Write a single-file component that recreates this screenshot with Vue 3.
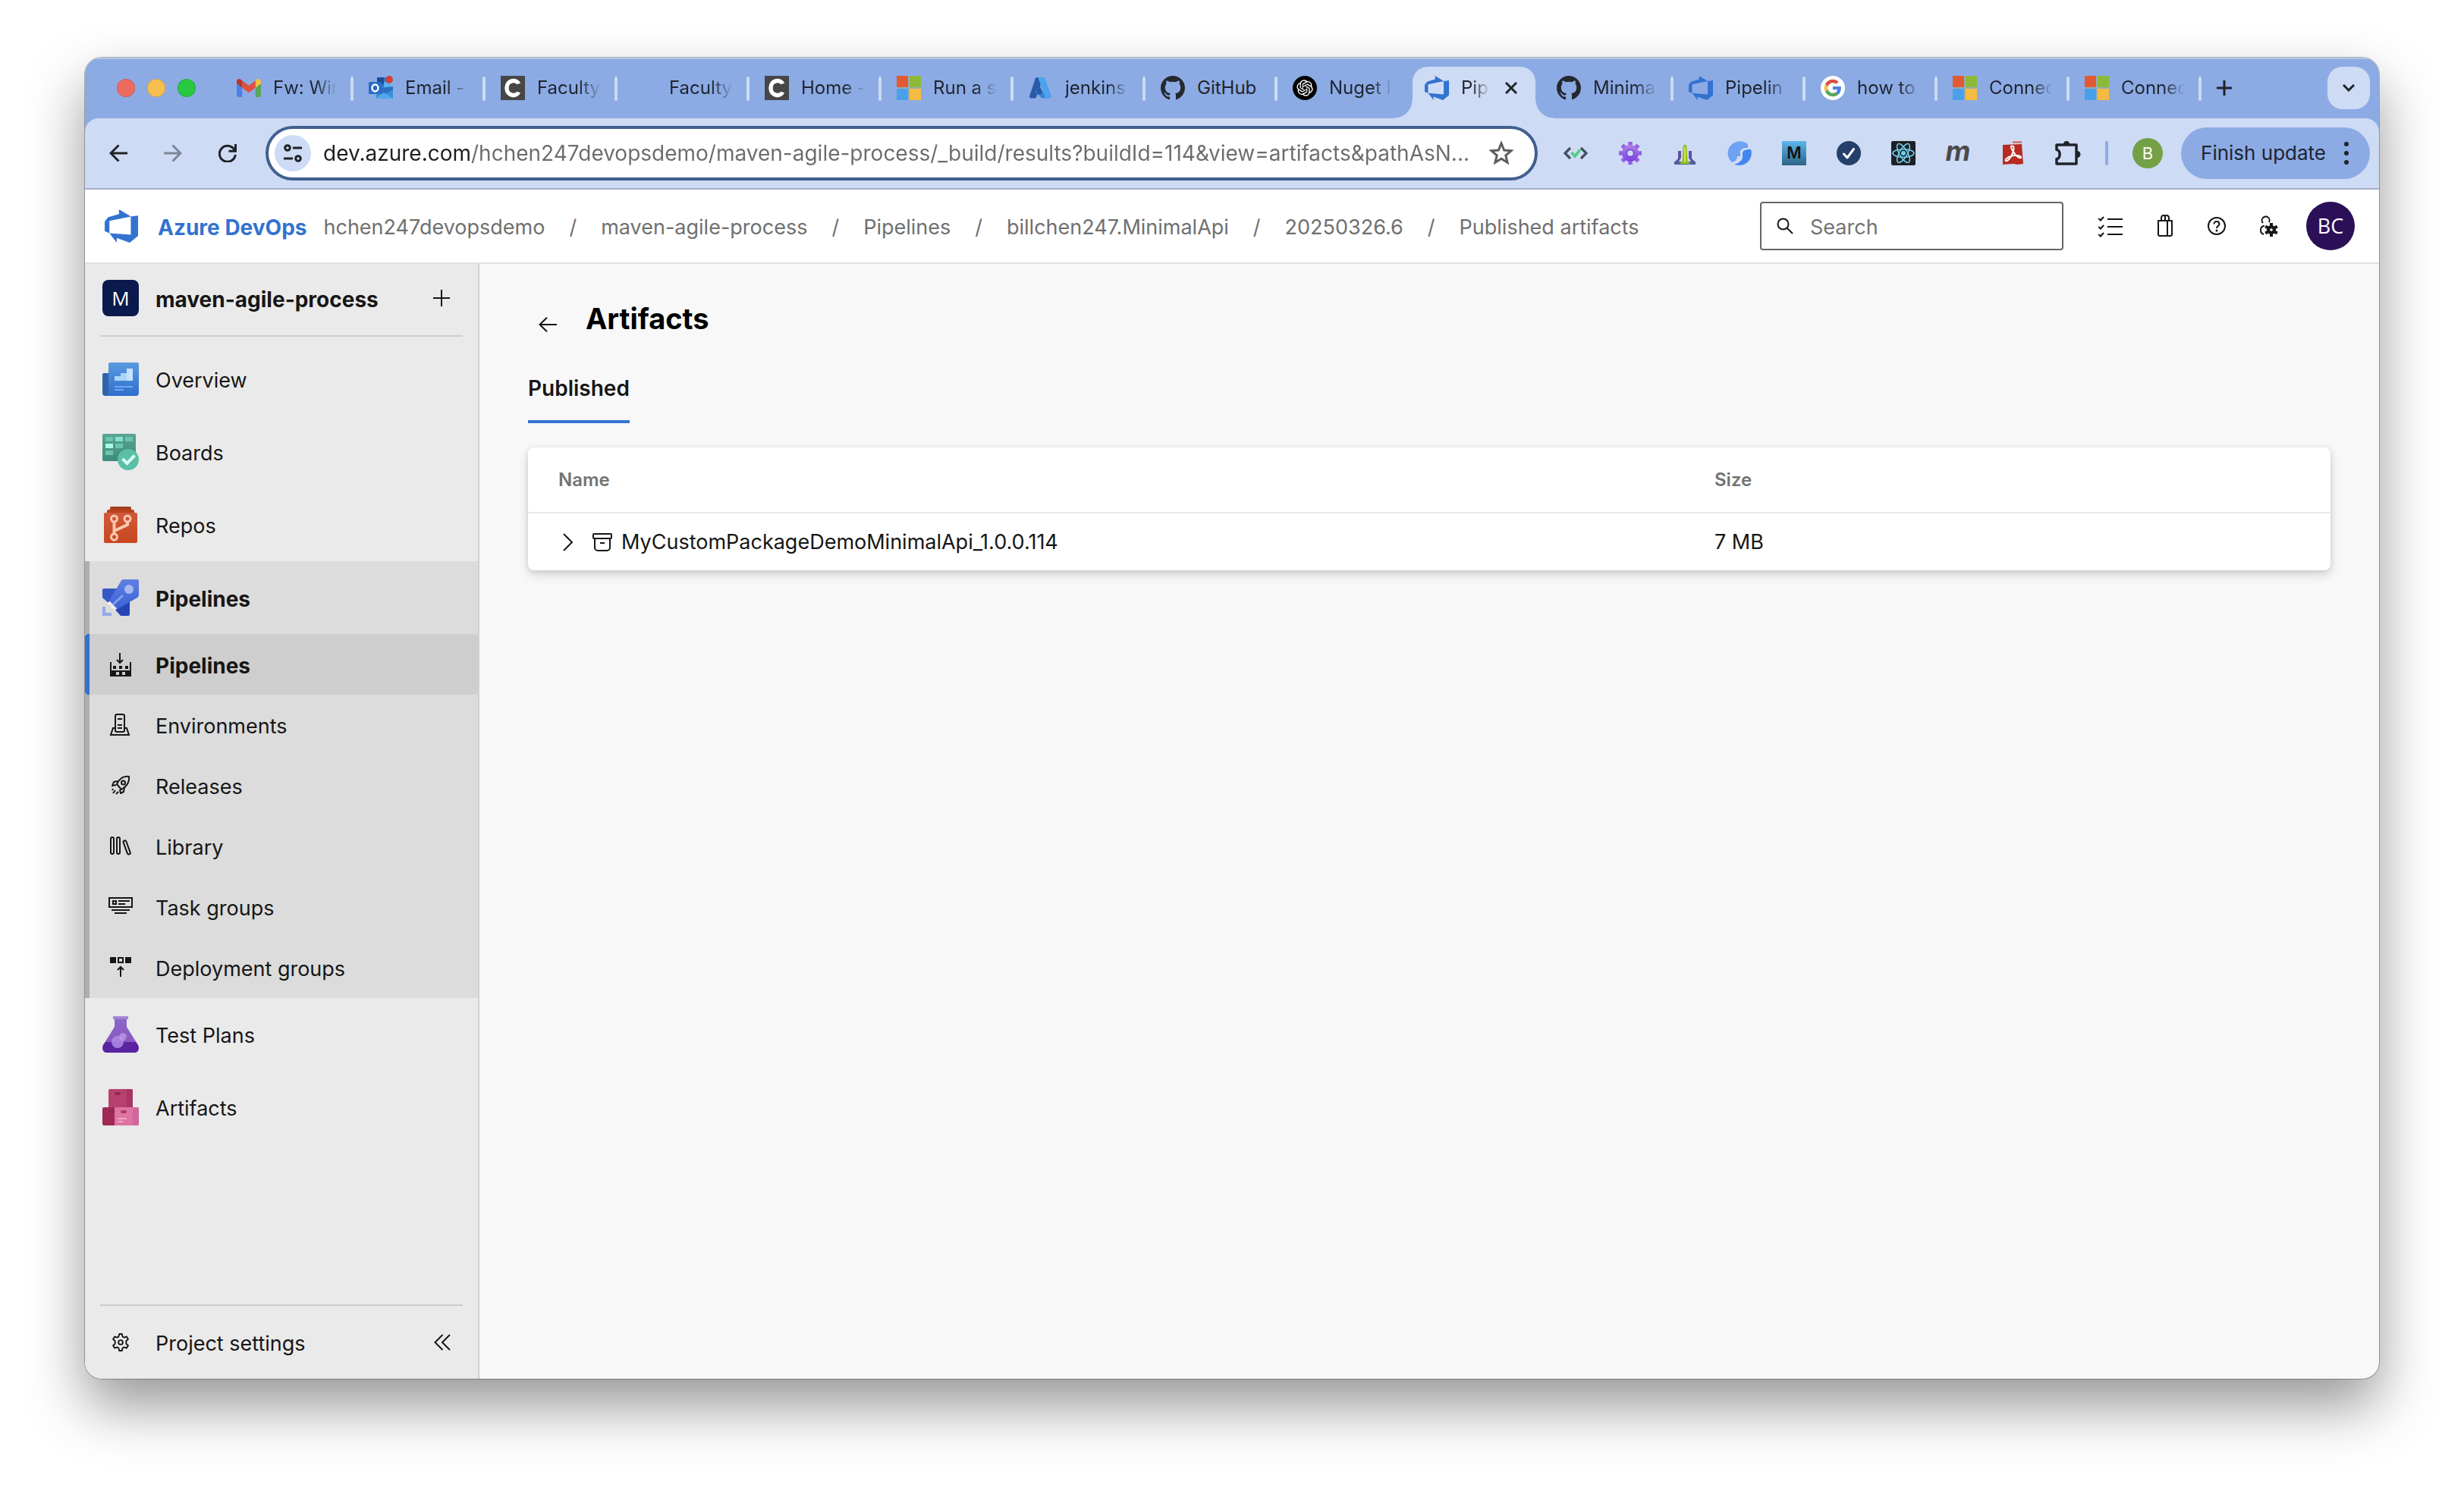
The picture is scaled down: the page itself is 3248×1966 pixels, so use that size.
<script setup>
const devopsMark =
  '<path fill="#3273cf" d="M17 4v9.74l-4 3.28-6.2-2.26V17l-3.51-4.59 10.23.8V4.44zm-3.41.49L7.85 1v2.29L2.58 4.84 1 6.87v4.61l2.26 1V6.57z"/>'
const githubMark =
  '<path fill="#24292f" d="M8 0C3.58 0 0 3.58 0 8c0 3.54 2.29 6.53 5.47 7.59.4.07.55-.17.55-.38 0-.19-.01-.82-.01-1.49-2.01.37-2.53-.49-2.69-.94-.09-.23-.48-.94-.82-1.13-.28-.15-.68-.52-.01-.53.63-.01 1.08.58 1.23.82.72 1.21 1.87.87 2.33.66.07-.52.28-.87.51-1.07-1.78-.2-3.64-.89-3.64-3.95 0-.87.31-1.59.82-2.15-.08-.2-.36-1.02.08-2.12 0 0 .67-.21 2.2.82.64-.18 1.32-.27 2-.27s1.36.09 2 .27c1.53-1.04 2.2-.82 2.2-.82.44 1.1.16 1.92.08 2.12.51.56.82 1.27.82 2.15 0 3.07-1.87 3.75-3.65 3.95.29.25.54.73.54 1.48 0 1.07-.01 1.93-.01 2.2 0 .21.15.46.55.38A8.01 8.01 0 0 0 16 8c0-4.42-3.58-8-8-8z"/>'
const cMark =
  '<rect width="32" height="32" fill="#464646"/><path d="M23.500 10.500C21.500 4.500 8 4.500 8 16s13.500 11.500 15.500 5.500" fill="none" stroke="#fff" stroke-width="5.500"/>'
const msMark =
  '<path fill="#e25a32" d="M0 0h15v15H0z"/><path fill="#8cba38" d="M17 0h15v15H17z"/><path fill="#48a0ea" d="M0 17h15v15H0z"/><path fill="#f6bb42" d="M17 17h15v15H17z"/><path stroke="#9fae9f" stroke-width="2" d="M0 16h32M16 0v32" opacity=".6"/>'

const icons = {
  gmail: [
    '52 42 88 66',
    '<path fill="#4f80e8" d="M58 108h14V74L52 59v43c0 3.320 2.690 6 6 6"/><path fill="#58a55c" d="M120 108h14c3.320 0 6-2.690 6-6V59l-20 15"/><path fill="#f2c042" d="M120 48v26l20-15v-8c0-7.420-8.470-11.650-14.400-7.200"/><path fill="#e0503f" d="M72 74V48l24 18 24-18v26L96 92"/><path fill="#b8362a" d="M52 51v8l20 15V48l-5.600-4.200c-5.940-4.450-14.400-.220-14.400 7.200"/>',
  ],
  outlook: [
    '0 0 32 32',
    '<path fill="#2f78c8" d="M11 2h18v18H11z"/><path fill="#1c4f96" d="M11 2h9v9h-9z"/><path fill="#57b4f0" d="M20 8h9v9h-9z"/><path fill="#3b8fdd" d="M9 16l23-1v14a1 1 0 0 1-1 1H10z"/><path fill="#2a6fbd" d="M32 14v4l-12 7-11-8z"/><path fill="#52a9e8" d="M9 30l11-8 12 8z"/><rect x="0" y="8" width="17" height="16" rx="1" fill="#2b6cc4"/><ellipse cx="8.500" cy="16" rx="4" ry="4.500" fill="none" stroke="#fff" stroke-width="2.400"/><circle cx="27" cy="5" r="5" fill="#cf4339"/>',
  ],
  c: ['0 0 32 32', cMark],
  none: ['0 0 32 32', ''],
  ms: ['0 0 32 32', msMark],
  azure: [
    '0 0 32 32',
    '<path fill="#2a5aa8" d="M10.500 2h8.500L10 28a2 2 0 0 1-2 1.500H3a2 2 0 0 1-2-2.600L8.700 3.400A2 2 0 0 1 10.500 2z"/><path fill="#3a7fd0" d="M22 20H9.500a1 1 0 0 0-.6 1.600l8 7.400 1.600.500h7z"/><path fill="#4aa3ee" d="M21.300 3.300A2 2 0 0 0 19.500 2H11a2 2 0 0 1 1.800 1.300L21 27a2 2 0 0 1-1.900 2.500h8.700A2 2 0 0 0 30 27z"/><path fill="#2a5aa8" d="M14 12l-4 12h6l2-3z"/>',
  ],
  github: ['0 0 16 16', githubMark],
  openai: [
    '-6 -6 36 36',
    '<circle cx="12" cy="12" r="18"/><path fill="#fff" d="M22.2819 9.8211a5.9847 5.9847 0 0 0-.5157-4.9108 6.0462 6.0462 0 0 0-6.5098-2.9A6.0651 6.0651 0 0 0 4.9807 4.1818a5.9847 5.9847 0 0 0-3.9977 2.9 6.0462 6.0462 0 0 0 .7427 7.0966 5.98 5.98 0 0 0 .511 4.9107 6.051 6.051 0 0 0 6.5146 2.9001A5.9847 5.9847 0 0 0 13.2599 24a6.0557 6.0557 0 0 0 5.7718-4.2058 5.9894 5.9894 0 0 0 3.9977-2.9001 6.0557 6.0557 0 0 0-.7475-7.0729zm-9.022 12.6081a4.4755 4.4755 0 0 1-2.8764-1.0408l.1419-.0804 4.7783-2.7582a.7948.7948 0 0 0 .3927-.6813v-6.7369l2.02 1.1686a.071.071 0 0 1 .038.052v5.5826a4.504 4.504 0 0 1-4.4945 4.4944zm-9.6607-4.1254a4.4708 4.4708 0 0 1-.5346-3.0137l.142.0852 4.783 2.7582a.7712.7712 0 0 0 .7806 0l5.8428-3.3685v2.3324a.0804.0804 0 0 1-.0332.0615L9.74 19.9502a4.4992 4.4992 0 0 1-6.1408-1.6464zM2.3408 7.8956a4.485 4.485 0 0 1 2.3655-1.9728V11.6a.7664.7664 0 0 0 .3879.6765l5.8144 3.3543-2.0201 1.1685a.0757.0757 0 0 1-.071 0l-4.8303-2.7865A4.504 4.504 0 0 1 2.3408 7.872zm16.5963 3.8558L13.1038 8.364 15.1192 7.2a.0757.0757 0 0 1 .071 0l4.8303 2.7913a4.4944 4.4944 0 0 1-.6765 8.1042v-5.6772a.79.79 0 0 0-.407-.667zm2.0107-3.0231l-.142-.0852-4.7735-2.7818a.7759.7759 0 0 0-.7854 0L9.409 9.2297V6.8974a.0662.0662 0 0 1 .0284-.0615l4.8303-2.7866a4.4992 4.4992 0 0 1 6.6802 4.66zM8.3065 12.863l-2.02-1.1638a.0804.0804 0 0 1-.038-.0567V6.0742a4.4992 4.4992 0 0 1 7.3757-3.4537l-.142.0805L8.704 5.459a.7948.7948 0 0 0-.3927.6813zm1.0976-2.3654l2.602-1.4998 2.6069 1.4998v2.9994l-2.5974 1.4997-2.6067-1.4997Z"/>',
  ],
  devops: ['1 1 16 16', devopsMark],
  google: [
    '-10 -10 68 68',
    '<circle cx="24" cy="24" r="34" fill="#fff"/><path fill="#d94f40" d="M24 9.500c3.540 0 6.710 1.220 9.210 3.600l6.850-6.850C35.900 2.380 30.470 0 24 0 14.620 0 6.510 5.380 2.560 13.220l7.980 6.190C12.430 13.720 17.740 9.500 24 9.500z"/><path fill="#4b80e8" d="M46.980 24.550c0-1.570-.150-3.090-.380-4.550H24v9.020h12.940c-.580 2.960-2.260 5.480-4.780 7.180l7.730 6c4.510-4.180 7.090-10.360 7.090-17.650z"/><path fill="#f2bd42" d="M10.530 28.590c-.480-1.450-.760-2.990-.760-4.590s.270-3.140.760-4.590l-7.980-6.190C.920 16.460 0 20.120 0 24s.920 7.540 2.560 10.780l7.970-6.190z"/><path fill="#58a55c" d="M24 48c6.480 0 11.930-2.130 15.890-5.810l-7.730-6c-2.150 1.450-4.920 2.300-8.160 2.300-6.260 0-11.570-4.220-13.470-9.910l-7.980 6.190C6.510 42.620 14.620 48 24 48z"/>',
  ],

  extCode: [
    '0 0 32 32',
    '<path fill="none" stroke="#42505e" stroke-width="3.200" d="M9 9l-7 7 7 7M23 9l7 7-7 7"/><path fill="none" stroke="#4fce84" stroke-width="3.600" d="M10.500 15l4.500 5 7-8.500"/>',
  ],
  extGear: [
    '0 0 32 32',
    '<defs><linearGradient id="pg" x1="0" y1="0" x2="0" y2="1"><stop offset="0" stop-color="#b084e4"/><stop offset="1" stop-color="#7a3fe4"/></linearGradient></defs><g stroke="#9561e4" stroke-width="5.500"><path d="M16 1v30M1 16h30M5.400 5.400l21.200 21.200M26.600 5.400L5.400 26.600"/></g><circle cx="16" cy="16" r="11" fill="url(#pg)"/><circle cx="16" cy="16" r="4.600" fill="#cedbf5" stroke="#7440d8" stroke-width="1.500"/>',
  ],
  extTower: [
    '0 0 32 32',
    '<path fill="#5b52a6" d="M7 13h4v9l-3 5H3l4-4zM21 13h4v10l4 4h-5l-3-5z"/><path fill="#4f5f9c" d="M2 27h28v4H2z"/><path fill="#8fc31f" d="M13.500 7L16 4l2.500 3 1 19 4 4h-15l4-4z"/><path fill="#d4e157" d="M15 8h2v20h-2z"/>',
  ],
  extSwirl: [
    '0 0 32 32',
    '<path fill="#6fa2f2" d="M27 4.400A16 16 0 0 0 .500 16c0 5 2 9 5.500 12 5-1 7-4 7-8v-5c0-5 2-7 6-8.200z"/><path fill="#6fa2f2" d="M27 4.400C20 4 12 8 12 14v6h5v-6c0-3 4-5 10-5z"/><path fill="#4287f0" d="M31 11A16 16 0 0 1 9 30.500c6-1 11-5 11-9.500v-5c0-4 5-5 11-5z"/>',
  ],
  extM: [
    '0 0 32 32',
    '<defs><linearGradient id="mg" x1="0" y1="0" x2="0" y2="1"><stop offset="0" stop-color="#5cb6ec"/><stop offset="1" stop-color="#2d6384"/></linearGradient></defs><rect width="32" height="32" fill="url(#mg)"/><text x="16" y="23" text-anchor="middle" font-family="Inter, sans-serif" font-weight="600" font-size="21" fill="#111">M</text>',
  ],
  extCheck: [
    '0 0 32 32',
    '<circle cx="16" cy="16" r="16" fill="#253f6b"/><path fill="none" stroke="#fff" stroke-width="3" stroke-linecap="round" stroke-linejoin="round" d="M9.500 17l4.500 5 8.500-11.500"/>',
  ],
  extReact: [
    '0 0 32 32',
    '<rect width="32" height="32" rx="2" fill="#1f2023"/><g fill="none" stroke="#6fd0ee" stroke-width="1.600"><ellipse cx="16" cy="16" rx="14" ry="5.300"/><ellipse cx="16" cy="16" rx="14" ry="5.300" transform="rotate(60 16 16)"/><ellipse cx="16" cy="16" rx="14" ry="5.300" transform="rotate(120 16 16)"/></g><circle cx="16" cy="16" r="3" fill="#6fd0ee"/>',
  ],
  extItalic: [
    '0 0 32 32',
    '<text x="16" y="26" text-anchor="middle" font-family="Inter, sans-serif" font-style="italic" font-weight="700" font-size="36" fill="#4a4a4c">m</text>',
  ],
  extPdf: [
    '0 0 32 32',
    '<path fill="#b92b22" d="M3 5l25-1 2 26-8 1-5-1-14 1z"/><path stroke="#d9534a" stroke-width="2" d="M16 1.500h12"/><path fill="none" stroke="#fff" stroke-width="2" stroke-linecap="round" d="M14 7c5-2 4 4 1 11-2 5-6 9-8 8s2-5 8-6.500 11-.5 12 1.500-4 2-8-4-6-8-5-10z"/>',
  ],
  puzzle: [
    '0 0 36 36',
    '<path fill="none" stroke="#1f2328" stroke-width="3.500" stroke-linejoin="round" d="M4 7h26v25H4v-6.500c5.500 0 5.500-12 0-12z"/><path fill="#1f2328" d="M13 6a4 4 0 0 1 8 0zM31 15a4.500 4.500 0 0 1 0 9z"/>',
  ],

  overview: [
    '0 0 48 48',
    '<defs><linearGradient id="ov" x1="0" y1="0" x2="0" y2="1"><stop offset="0" stop-color="#5a9ae0"/><stop offset="1" stop-color="#2f6ecb"/></linearGradient></defs><path fill="#2f64a8" d="M0 18a2 2 0 0 1 2-2h8v30H4a4 4 0 0 1-4-4z"/><path fill="url(#ov)" d="M8 4a2 2 0 0 1 2-2h36a2 2 0 0 1 2 2v38a4 4 0 0 1-4 4H5c2 0 3-2 3-4z"/><path fill="#a9d4fb" d="M16 20h8v-4h8v10H16z"/><path fill="#c6e3fd" d="M32 10h8v16h-8z"/><path stroke="#6fabef" stroke-width="2" d="M16 34h24M16 38h12"/>',
  ],
  boards: [
    '0 0 48 48',
    '<defs><linearGradient id="bo" x1="0" y1="0" x2="0" y2="1"><stop offset="0" stop-color="#5aa493"/><stop offset="1" stop-color="#3d8c79"/></linearGradient></defs><rect width="44" height="36" rx="2" fill="url(#bo)"/><path fill="#6cc4b0" d="M4 4h10v6H4zM30 4h10v6H30zM17 13h10v6H17zM4 22h10v6H4z"/><path fill="#86e0cb" d="M17 4h10v6H17z"/><path fill="#a8fbe8" d="M4 13h10v6H4z"/><circle cx="34" cy="34" r="14" fill="#5abfa6"/><path fill="none" stroke="#d8fff6" stroke-width="4" d="M26.500 33l6 6 10-10.500"/>',
  ],
  repos: [
    '0 0 48 48',
    '<defs><linearGradient id="re" x1="0" y1="0" x2="0" y2="1"><stop offset="0" stop-color="#d0593a"/><stop offset="1" stop-color="#c8471f"/></linearGradient></defs><path fill="#a23c1c" d="M10 2a2 2 0 0 1 2-2h24a2 2 0 0 1 2 2v6H10z"/><path fill="#b9441f" d="M6 6a2 2 0 0 1 2-2h32a2 2 0 0 1 2 2v6H6z"/><rect x="2" y="8" width="44" height="40" rx="2" fill="url(#re)"/><g fill="none" stroke="#f9c7ae" stroke-width="3"><circle cx="15.500" cy="16" r="4"/><circle cx="33" cy="16" r="4"/><circle cx="15.500" cy="40" r="4"/><path stroke-width="4" d="M15.500 20v16M33 20v4l-17.500 8v4"/></g>',
  ],
  pipelines: [
    '0 0 48 48',
    '<defs><linearGradient id="pi" x1="0" y1="0" x2="0" y2="1"><stop offset="0" stop-color="#5f80e2"/><stop offset="1" stop-color="#3b62d6"/></linearGradient></defs><path fill="#3558c4" d="M0 14a2 2 0 0 1 2-2h18L8 31 0 24z"/><path fill="#2446b4" d="M36 28v18a2 2 0 0 1-2 2H24l-7-8z"/><path fill="url(#pi)" d="M28 0h18a2 2 0 0 1 2 2v18c0 2-1 3-2 4L20 39l-11-11L24 3c1-2 2-3 4-3z"/><circle cx="35" cy="13" r="6" fill="#a7b8f0"/><path stroke="#86a0ee" stroke-width="3" d="M14 33l13-12"/><path stroke="#f4f6ff" stroke-width="3" stroke-dasharray="5 1" d="M8 30l9 10"/><path fill="none" stroke="#93a9ea" stroke-width="4" d="M2 36v10h10"/>',
  ],
  testPlans: [
    '0 0 48 48',
    '<defs><linearGradient id="tp" x1="0" y1="0" x2="0" y2="1"><stop offset="0" stop-color="#8a68c8"/><stop offset="1" stop-color="#8a50c0"/></linearGradient></defs><path fill="url(#tp)" d="M16 2h16v12l15 24c2 5 0 10-5 10H6c-5 0-7-5-5-10l15-24z"/><path fill="#5a23a0" d="M4 34h40l3 4c2 5 0 10-5 10H6c-5 0-7-5-5-10z"/><path fill="#a184d8" d="M14 0h20v4H14z"/><circle cx="20" cy="34" r="8" fill="#b08be4" opacity=".85"/><circle cx="27" cy="27" r="5" fill="#c0a0ea" opacity=".7"/>',
  ],
  artifacts: [
    '0 0 48 48',
    '<path fill="#b8406e" d="M8 2a2 2 0 0 1 2-2h28a2 2 0 0 1 2 2v22H8z"/><path fill="#a83562" d="M32 0h6a2 2 0 0 1 2 2v22h-8z"/><path fill="#9f2a56" d="M0 26a2 2 0 0 1 2-2h14v24H2a2 2 0 0 1-2-2z"/><path fill="#dd75a3" d="M16 24h30a2 2 0 0 1 2 2v20a2 2 0 0 1-2 2H16z"/><path fill="#d2669a" d="M40 24h6a2 2 0 0 1 2 2v20a2 2 0 0 1-2 2h-6z"/><g stroke-width="4" stroke-linecap="round"><path stroke="#8f2a50" d="M18 6h4M10 30h4"/><path stroke="#b03a70" d="M26 30h4"/></g><path stroke="#f0a3c6" stroke-width="2" d="M20 39h12M20 43h7"/>',
  ],

  subPipelines: [
    '0 0 32 32',
    '<path fill="#161616" d="M2 13h2v9h24v-9h2v19H2zM6 18h4v4H6zM14 18h4v4h-4zM22 18h4v4h-4z"/><path fill="#cecece" d="M4 22h24v2H4zM10 26h4v4h-4zM18 26h4v4h-4z"/><path fill="none" stroke="#161616" stroke-width="2" d="M15 1v13M11 10l4 4 4-4"/>',
  ],
  environments: [
    '0 0 32 32',
    '<g fill="none" stroke="#161616" stroke-width="2"><rect x="9" y="2" width="12" height="23" rx="2"/><path d="M9 20H6L3 29h24l-3-9h-3M12 8h6M12 16h6M12 20h6"/></g>',
  ],
  releases: [
    '0 0 32 32',
    '<g fill="none" stroke="#161616" stroke-width="2" stroke-linejoin="round"><path d="M27 4c-8-1-13 3-16 10l6 7C24 17 28 12 27 4z"/><circle cx="19.500" cy="12" r="2.500"/><path d="M12 10l-5 1-2 5 5-1M21 18l-1 6-4 2-1-5"/><path d="M6 20l-1 2M9 22l-3 4M13 24l-3 3"/></g>',
  ],
  library: [
    '0 0 32 32',
    '<g fill="none" stroke="#161616" stroke-width="2"><rect x="3" y="4" width="4" height="22" rx="2"/><rect x="11" y="4" width="4" height="22" rx="2"/><rect x="22" y="8" width="4" height="19" rx="2" transform="rotate(-20 24 17)"/></g>',
  ],
  taskGroups: [
    '0 0 32 32',
    '<g fill="none" stroke="#161616" stroke-width="2"><path d="M1 4h30v12H1zM6 8h4v4H6zM13 8h15M13 12h9M4 20h24M8 24h16"/></g>',
  ],
  deployment: [
    '0 0 32 32',
    '<path fill="#161616" d="M2 2h8v8H2zM22 2h8v8h-8z"/><g fill="none" stroke="#161616" stroke-width="2"><path d="M13 3h6v6h-6zM16 28V15M12 19l4-4 4 4"/></g>',
  ],
  gear: [
    '0 0 24 24',
    '<g fill="none" stroke="#161616" stroke-width="1.900" stroke-linejoin="round"><path d="M10.200 1h3.600l.8 3.500 1.900 1.100 3.400-1.100 2 3.300-2.600 2.400v3.600l2.600 2.400-2 3.300-3.400-1.100-1.900 1.100-.8 3.500h-3.600l-.8-3.500-1.900-1.100-3.400 1.100-2-3.300 2.600-2.400v-3.600L2.100 7.800l2-3.300 3.400 1.100 1.900-1.100z"/><circle cx="12" cy="12" r="2.900"/></g>',
  ],

  tasks: [
    '0 0 32 32',
    '<g fill="none" stroke="#161616" stroke-width="2"><path d="M12 7h20M12 17h20M12 27h20M0 6l3 2.500L7 4M0 17l3 2.500L7 15M0 27l3 2.500L7 25"/></g>',
  ],
  bag: [
    '0 0 32 32',
    '<g fill="none" stroke="#161616" stroke-width="2" stroke-linejoin="round"><path d="M7 9h18v18a2 2 0 0 1-2 2H9a2 2 0 0 1-2-2zM19 9v20M11 9V5a3 3 0 0 1 5-2.200A3 3 0 0 1 21 5v4M16 3v6"/></g>',
  ],
  help: [
    '0 0 32 32',
    '<g fill="none" stroke="#161616" stroke-width="2"><circle cx="16" cy="16" r="11"/><path d="M12.500 13.500c0-5 7-4.500 7 0 0 2.500-3.500 2.500-3.500 5.500"/></g><circle cx="16" cy="22" r="1.500" fill="#161616"/>',
  ],
  userGear: [
    '0 0 32 32',
    '<g fill="none" stroke="#161616" stroke-width="2"><path d="M9 12a5 5 0 1 1 8-1M10 27c-6-2-5-11 1-11"/></g><g stroke="#161616" stroke-width="4"><path d="M20 12v18M12.200 16.500l15.600 9M27.800 16.500l-15.600 9"/></g><circle cx="20" cy="21" r="6" fill="#161616"/><circle cx="20" cy="21" r="1.800" fill="#fff"/>',
  ],
}

const tabs = [
  { icon: 'gmail', label: 'Fw: Win' },
  { icon: 'outlook', label: 'Email -' },
  { icon: 'c', label: 'Faculty' },
  { icon: 'none', label: 'Faculty' },
  { icon: 'c', label: 'Home -' },
  { icon: 'ms', label: 'Run a s' },
  { icon: 'azure', label: 'jenkins' },
  { icon: 'github', label: 'GitHub', whole: true },
  { icon: 'openai', label: 'Nuget I', bare: true },
  { icon: 'devops', label: 'Pip', active: true },
  { icon: 'github', label: 'Minima' },
  { icon: 'devops', label: 'Pipelin' },
  { icon: 'google', label: 'how to' },
  { icon: 'ms', label: 'Connec' },
  { icon: 'ms', label: 'Connec' },
]

const extensions = ['extCode', 'extGear', 'extTower', 'extSwirl', 'extM', 'extCheck', 'extReact', 'extItalic', 'extPdf', 'puzzle']
const crumbs = ['hchen247devopsdemo', 'maven-agile-process', 'Pipelines', 'billchen247.MinimalApi', '20250326.6', 'Published artifacts']
const actions = ['tasks', 'bag', 'help', 'userGear']

const topLinks = [
  { icon: 'overview', label: 'Overview' },
  { icon: 'boards', label: 'Boards' },
  { icon: 'repos', label: 'Repos' },
]
const pipelineLinks = [
  { icon: 'subPipelines', label: 'Pipelines', active: true },
  { icon: 'environments', label: 'Environments' },
  { icon: 'releases', label: 'Releases' },
  { icon: 'library', label: 'Library' },
  { icon: 'taskGroups', label: 'Task groups' },
  { icon: 'deployment', label: 'Deployment groups' },
]
const bottomLinks = [
  { icon: 'testPlans', label: 'Test Plans' },
  { icon: 'artifacts', label: 'Artifacts' },
]
const url = 'dev.azure.com/hchen247devopsdemo/maven-agile-process/_build/results?buildId=114&view=artifacts&pathAsN...'
</script>

<template>
  <div class="desktop">
    <div class="window">
      <div class="tabstrip">
        <div class="lights"><i class="light red"></i><i class="light amber"></i><i class="light green"></i></div>
        <div class="tabs">
          <div v-for="(tab, i) in tabs" :key="i" class="tab" :class="{ active: tab.active, bare: tab.bare, whole: tab.whole }">
            <svg class="icon32" :viewBox="icons[tab.icon][0]" v-html="icons[tab.icon][1]"></svg>
            <button class="tab-label" type="button">{{ tab.label }}</button>
            <button v-if="tab.active" class="tab-close" type="button" aria-label="Close tab">
              <svg viewBox="0 0 16 16"><path d="M1 1l14 14M15 1L1 15" /></svg>
            </button>
          </div>
        </div>
        <button class="new-tab" type="button" aria-label="New tab">
          <svg viewBox="0 0 20 20"><path d="M10 0v20M0 10h20" /></svg>
        </button>
        <button class="tab-search" type="button" aria-label="Search tabs">
          <svg viewBox="0 0 16 10"><path d="M1 1l7 7 7-7" /></svg>
        </button>
      </div>

      <div class="toolbar-wrap">
        <div class="toolbar">
          <button class="tool" type="button" aria-label="Back">
            <svg viewBox="0 0 24 24"><path d="M24 12H2M12.500 1.500L2 12l10.500 10.500" /></svg>
          </button>
          <button class="tool dim" type="button" aria-label="Forward">
            <svg viewBox="0 0 24 24"><path d="M0 12h22M11.500 1.500L22 12 11.500 22.500" /></svg>
          </button>
          <button class="tool" type="button" aria-label="Reload">
            <svg viewBox="0 0 24 24"><path d="M21.500 8.500A10.500 10.500 0 1 0 22.300 14M22.500 0v9.200h-9" /></svg>
          </button>
          <div class="omnibox">
            <button class="site-info" type="button" aria-label="Site information">
              <svg viewBox="0 0 24 24"><circle cx="5" cy="5" r="3.300" /><path d="M12 5h12M0 19h12" /><circle cx="19" cy="19" r="3.300" /></svg>
            </button>
            <input class="url" type="text" aria-label="Address" :value="url" />
            <button class="star" type="button" aria-label="Bookmark">
              <svg viewBox="0 0 32 32"><path d="M16 3l3.700 9.100 9.300.700-7.200 6.100 2.300 9.400L16 23.200l-8.100 5.100 2.300-9.400L3 12.800l9.300-.7z" /></svg>
            </button>
          </div>
          <div class="extensions">
            <button v-for="name in extensions" :key="name" class="ext" type="button" :aria-label="name">
              <svg :class="name === 'puzzle' ? 'icon36' : 'icon32'" :viewBox="icons[name][0]" v-html="icons[name][1]"></svg>
            </button>
          </div>
          <span class="tool-sep"></span>
          <button class="profile" type="button">B</button>
          <button class="update" type="button">
            <span>Finish update</span>
            <svg viewBox="0 0 6 30"><circle cx="3" cy="3" r="3" /><circle cx="3" cy="15" r="3" /><circle cx="3" cy="27" r="3" /></svg>
          </button>
        </div>
      </div>

      <header class="appbar">
        <a class="brand" href="#">
          <svg class="brand-mark" :viewBox="icons.devops[0]" v-html="icons.devops[1]"></svg>
          <span class="label">Azure DevOps</span>
        </a>
        <nav class="crumbs label" aria-label="Breadcrumb">
          <template v-for="(crumb, i) in crumbs" :key="crumb">
            <span v-if="i" class="slash">/</span>
            <a href="#">{{ crumb }}</a>
          </template>
        </nav>
        <label class="search">
          <svg viewBox="0 0 22 22"><circle cx="8.500" cy="8.500" r="7" /><path d="M13.500 13.500L21 21" /></svg>
          <input class="label" type="search" placeholder="Search" aria-label="Search" />
        </label>
        <div class="actions">
          <button v-for="name in actions" :key="name" type="button" :aria-label="name">
            <svg class="icon32" :viewBox="icons[name][0]" v-html="icons[name][1]"></svg>
          </button>
        </div>
        <button class="avatar" type="button">BC</button>
      </header>

      <div class="body">
        <aside class="sidebar">
          <div class="project">
            <span class="project-badge">M</span>
            <a class="project-name label" href="#">maven-agile-process</a>
            <button class="side-btn" type="button" aria-label="Add">
              <svg viewBox="0 0 22 22"><path d="M11 0v22M0 11h22" /></svg>
            </button>
          </div>
          <nav class="links">
            <a v-for="l in topLinks" :key="l.label" class="link" href="#">
              <svg class="icon48" :viewBox="icons[l.icon][0]" v-html="icons[l.icon][1]"></svg>
              <span class="label">{{ l.label }}</span>
            </a>
            <div class="group">
              <a class="link strong" href="#">
                <svg class="icon48" :viewBox="icons.pipelines[0]" v-html="icons.pipelines[1]"></svg>
                <span class="label">Pipelines</span>
              </a>
              <a v-for="l in pipelineLinks" :key="l.label" class="link sub" :class="{ strong: l.active, current: l.active }" href="#">
                <span class="sub-icon"><svg class="icon32" :viewBox="icons[l.icon][0]" v-html="icons[l.icon][1]"></svg></span>
                <span class="label">{{ l.label }}</span>
              </a>
            </div>
            <a v-for="l in bottomLinks" :key="l.label" class="link" href="#">
              <svg class="icon48" :viewBox="icons[l.icon][0]" v-html="icons[l.icon][1]"></svg>
              <span class="label">{{ l.label }}</span>
            </a>
          </nav>
          <div class="settings">
            <a class="settings-link" href="#">
              <span class="sub-icon"><svg class="icon24" :viewBox="icons.gear[0]" v-html="icons.gear[1]"></svg></span>
              <span class="label">Project settings</span>
            </a>
            <button class="side-btn" type="button" aria-label="Collapse">
              <svg viewBox="0 0 22 22"><path d="M11.500 1L1.500 11l10 10M21 1L11 11l10 10" /></svg>
            </button>
          </div>
        </aside>

        <main class="content">
          <div class="title-row">
            <button class="back" type="button" aria-label="Go back">
              <svg viewBox="0 0 24 20"><path d="M24 10H1.500M11 .700L1.500 10l9.500 9.300" /></svg>
            </button>
            <h1>Artifacts</h1>
          </div>
          <div class="pivot"><button type="button">Published</button></div>
          <div class="card">
            <table>
              <colgroup><col /><col class="size-col" /></colgroup>
              <thead>
                <tr><th>Name</th><th>Size</th></tr>
              </thead>
              <tbody>
                <tr>
                  <td>
                    <div class="artifact">
                      <button class="expand" type="button" aria-label="Expand">
                        <svg viewBox="0 0 14 24"><path d="M1 1l11 11L1 23" /></svg>
                      </button>
                      <svg class="box" viewBox="0 0 26 24"><path d="M1 2a1 1 0 0 1 1-1h22a1 1 0 0 1 1 1v4a1 1 0 0 1-1 1H2a1 1 0 0 1-1-1zM3 7v12a4 4 0 0 0 4 4h12a4 4 0 0 0 4-4V7M10 13h6" /></svg>
                      <span>MyCustomPackageDemoMinimalApi_1.0.0.114</span>
                    </div>
                  </td>
                  <td>7 MB</td>
                </tr>
              </tbody>
            </table>
          </div>
        </main>
      </div>
    </div>
  </div>
</template>

<style>
body {
  background: #fff;
}
</style>

<style scoped>
* {
  box-sizing: border-box;
}
.desktop {
  display: flex;
  min-height: 100vh;
  padding: 76px 112px 148px;
  font-family: Inter, 'Liberation Sans', sans-serif;
  font-size: 27px;
  line-height: 40px;
  color: #161616;
  overflow: hidden;
}
.window {
  flex: 1;
  min-width: 0;
  display: flex;
  flex-direction: column;
  border-radius: 22px;
  overflow: hidden;
  background: #f8f8f8;
  box-shadow: 0 0 0 1px rgba(0, 0, 0, 0.28), 0 36px 76px rgba(0, 0, 0, 0.41);
}
button {
  display: flex;
  align-items: center;
  justify-content: center;
  flex: none;
  padding: 0;
  border: 0;
  background: none;
  color: inherit;
  font: inherit;
}
a {
  color: inherit;
  text-decoration: none;
}
svg {
  display: block;
  flex: none;
}
.label {
  padding-top: 4px;
}
.icon24 { width: 24px; height: 24px; }
.icon32 { width: 32px; height: 32px; }
.icon36 { width: 36px; height: 36px; }
.icon48 { width: 48px; height: 48px; }

/* tab strip */
.tabstrip {
  display: flex;
  align-items: center;
  height: 80px;
  padding: 0 12px 0 42px;
  background: #8cabe4;
  box-shadow: inset 0 2px 0 #b4c8ee;
}
.lights {
  display: flex;
  gap: 16px;
  margin-right: 32px;
}
.light {
  width: 24px;
  height: 24px;
  border-radius: 50%;
  border: 1px solid rgba(0, 0, 0, 0.12);
}
.red { background: #ed6a5e; }
.amber { background: #f5bf4f; }
.green { background: #28c840; }
.tabs {
  display: flex;
  flex: 0 1 2610px;
  min-width: 0;
  height: 80px;
}
.tab {
  position: relative;
  flex: 1 1 0;
  min-width: 0;
  display: flex;
  align-items: center;
  gap: 16px;
  padding-left: 22px;
}
.tab::after {
  content: '';
  position: absolute;
  right: -2px;
  top: 25px;
  width: 4px;
  height: 32px;
  border-radius: 2px;
  background: #cedbf5;
}
.tab.bare::after {
  display: none;
}
.tab-label {
  width: 96px;
  justify-content: flex-start;
  white-space: nowrap;
  font-size: 24px;
  line-height: 32px;
  color: #1f2430;
  -webkit-mask-image: linear-gradient(90deg, #000 56px, transparent 84px);
  mask-image: linear-gradient(90deg, #000 56px, transparent 84px);
}
.tab.whole .tab-label {
  -webkit-mask-image: none;
  mask-image: none;
}
.tab.active {
  z-index: 1;
}
.tab.active .tab-label {
  width: 40px;
  -webkit-mask-image: linear-gradient(90deg, #000 14px, transparent 38px);
  mask-image: linear-gradient(90deg, #000 14px, transparent 38px);
}
.tab.active::before {
  content: '';
  position: absolute;
  z-index: -1;
  left: 6px;
  right: 6px;
  top: 12px;
  bottom: 0;
  border-radius: 20px 20px 0 0;
  background: #cedbf5;
}
.tab.active::after {
  z-index: -1;
  left: -18px;
  right: -18px;
  top: auto;
  bottom: 0;
  width: auto;
  height: 24px;
  border-radius: 0;
  background:
    radial-gradient(circle at 0 0, transparent 23px, #cedbf5 24px) left / 24px 24px no-repeat,
    radial-gradient(circle at 100% 0, transparent 23px, #cedbf5 24px) right / 24px 24px no-repeat;
}
.tab-close {
  width: 20px;
  height: 32px;
}
.tab-close svg {
  width: 16px;
  height: 16px;
}
.tab-close svg, .new-tab svg, .tab-search svg, .tool svg {
  fill: none;
  stroke: #1f2328;
  stroke-width: 3;
}
.new-tab {
  width: 64px;
  height: 56px;
}
.new-tab svg {
  width: 20px;
  height: 20px;
}
.tab-search {
  width: 56px;
  height: 56px;
  margin-left: auto;
  border-radius: 20px;
  background: #cedbf5;
}
.tab-search svg {
  width: 16px;
  height: 10px;
}

/* toolbar */
.toolbar-wrap {
  background: #8cabe4;
}
.toolbar {
  display: flex;
  align-items: center;
  height: 94px;
  padding: 0 12px 0 8px;
  border-bottom: 2px solid #a7b1c9;
  border-radius: 18px 18px 0 0;
  background: #cedbf5;
}
.tool {
  width: 72px;
  height: 72px;
}
.tool svg {
  width: 24px;
  height: 24px;
}
.dim {
  opacity: 0.45;
}
.omnibox {
  flex: 1;
  min-width: 0;
  display: flex;
  align-items: center;
  height: 72px;
  margin-left: 14px;
  padding: 0 28px 0 8px;
  border: 4px solid #41608f;
  border-radius: 36px;
  background: #fff;
}
.site-info {
  width: 48px;
  height: 48px;
  border-radius: 50%;
  background: #cedbf5;
}
.site-info svg {
  width: 24px;
  height: 24px;
  fill: none;
  stroke: #1f2328;
  stroke-width: 3;
}
.url {
  flex: 1;
  min-width: 0;
  height: 48px;
  margin-left: 16px;
  padding: 0;
  border: 0;
  outline: 0;
  font: inherit;
  font-size: 28px;
  color: transparent;
  background: linear-gradient(90deg, #1f1f1f 194px, #6b6c6f 194px);
  -webkit-background-clip: text;
  background-clip: text;
}
.star svg {
  width: 32px;
  height: 32px;
  fill: none;
  stroke: #5c5d60;
  stroke-width: 3;
}
.extensions {
  display: flex;
  margin-left: 14px;
}
.ext {
  width: 72px;
  height: 72px;
}
.tool-sep {
  width: 4px;
  height: 32px;
  margin: 0 32px 0 14px;
  border-radius: 2px;
  background: #8cabe4;
}
.profile {
  width: 40px;
  height: 40px;
  border-radius: 50%;
  background: #74a046;
  color: #fff;
  font-size: 22px;
}
.update {
  gap: 24px;
  height: 68px;
  margin-left: 24px;
  padding: 0 28px 0 26px;
  border-radius: 34px;
  background: #8cabe4;
  color: #1f2430;
  font-size: 26px;
}
.update svg {
  width: 6px;
  height: 30px;
  fill: #1f2328;
}

/* application header */
.appbar {
  display: flex;
  align-items: center;
  height: 98px;
  padding: 0 32px 0 26px;
  border-bottom: 2px solid #e2e2e2;
  background: #fff;
}
.brand {
  display: flex;
  align-items: center;
  gap: 26px;
  color: #3273cf;
  font-size: 28px;
  font-weight: 700;
}
.brand-mark {
  width: 44px;
  height: 44px;
}
.crumbs {
  display: flex;
  flex: 1;
  min-width: 0;
  gap: 32px;
  margin-left: 22px;
  color: #707070;
  white-space: nowrap;
}
.search {
  display: flex;
  align-items: center;
  width: 400px;
  height: 64px;
  padding: 0 20px;
  border: 2px solid #666;
  border-radius: 4px;
  background: #fff;
}
.search svg {
  width: 22px;
  height: 22px;
  fill: none;
  stroke: #161616;
  stroke-width: 2;
}
.search input {
  flex: 1;
  min-width: 0;
  margin-left: 22px;
  padding: 4px 0 0;
  border: 0;
  outline: 0;
  background: none;
  font: inherit;
}
.search input::placeholder {
  color: #737373;
}
.actions {
  display: flex;
  gap: 36px;
  margin: 0 34px 0 46px;
}
.actions button:first-child {
  margin-right: 4px;
}
.avatar {
  width: 64px;
  height: 64px;
  border-radius: 50%;
  background: #2c1057;
  color: #fff;
  font-family: 'Open Sans', sans-serif;
}

/* sidebar */
.body {
  flex: 1;
  display: flex;
}
.sidebar {
  width: 520px;
  flex: none;
  display: flex;
  flex-direction: column;
  border-right: 2px solid #d0d0d0;
  background: #eaeaea;
}
.project {
  display: flex;
  align-items: center;
  gap: 22px;
  height: 96px;
  margin: 0 20px;
  padding: 0 16px 4px 3px;
  border-bottom: 2px solid #cdcdcd;
}
.project-badge {
  display: flex;
  align-items: center;
  justify-content: center;
  width: 48px;
  height: 48px;
  border-radius: 8px;
  background: #0a1a4c;
  color: #fff;
  font-family: 'Open Sans', sans-serif;
  font-size: 26px;
}
.project-name {
  flex: 1;
  font-size: 28px;
  font-weight: 700;
}
.side-btn {
  width: 24px;
  height: 40px;
}
.side-btn svg {
  width: 22px;
  height: 22px;
  fill: none;
  stroke: #161616;
  stroke-width: 2;
}
.links {
  flex: 1;
  padding-top: 8px;
}
.link {
  display: flex;
  align-items: center;
  gap: 22px;
  height: 96px;
  padding-left: 23px;
}
.group {
  background: #dcdcdc;
}
.group .link {
  padding-left: 17px;
  border-left: 6px solid #aeaeae;
}
.group .sub {
  height: 80px;
}
.group .current {
  border-left-color: #3273cf;
  border-radius: 4px;
  background: #cecece;
}
.strong {
  font-size: 28px;
  font-weight: 700;
}
.sub-icon {
  display: flex;
  justify-content: center;
  width: 48px;
}
.settings {
  display: flex;
  align-items: center;
  height: 98px;
  margin: 0 20px;
  padding: 0 15px 0 3px;
  border-top: 2px solid #cdcdcd;
}
.settings-link {
  flex: 1;
  display: flex;
  align-items: center;
  gap: 22px;
}

/* content */
.content {
  flex: 1;
  min-width: 0;
  padding: 44px 64px 0;
}
.title-row {
  display: flex;
  align-items: center;
  height: 56px;
}
.back {
  width: 52px;
  height: 52px;
  margin-top: 16px;
}
.back svg {
  width: 24px;
  height: 20px;
  fill: none;
  stroke: #161616;
  stroke-width: 2;
}
h1 {
  margin: 0 0 0 24px;
  font-size: 38px;
  font-weight: 700;
  line-height: 56px;
  color: #000;
}
.pivot {
  display: flex;
  margin-top: 30px;
}
.pivot button {
  height: 80px;
  padding-bottom: 8px;
  border-bottom: 4px solid #3273cf;
  font-size: 28px;
  font-weight: 600;
}
.card {
  margin-top: 32px;
  border-radius: 8px;
  background: #fff;
  box-shadow: 0 6px 14px rgba(0, 0, 0, 0.14), 0 1px 6px rgba(0, 0, 0, 0.1);
}
table {
  width: 100%;
  table-layout: fixed;
  border-collapse: collapse;
}
.size-col {
  width: 812px;
}
th {
  height: 86px;
  padding: 0;
  border-bottom: 2px solid #eaeaea;
  color: #737373;
  font-size: 24px;
  font-weight: 600;
  text-align: left;
}
th:first-child {
  padding-left: 40px;
}
td {
  height: 76px;
  padding: 0;
}
.artifact {
  display: flex;
  align-items: center;
  padding-left: 46px;
}
.expand svg {
  width: 14px;
  height: 24px;
}
.expand svg, .box {
  fill: none;
  stroke: #161616;
  stroke-width: 2;
}
.box {
  width: 26px;
  height: 24px;
  margin: 0 12px 0 25px;
}
</style>
